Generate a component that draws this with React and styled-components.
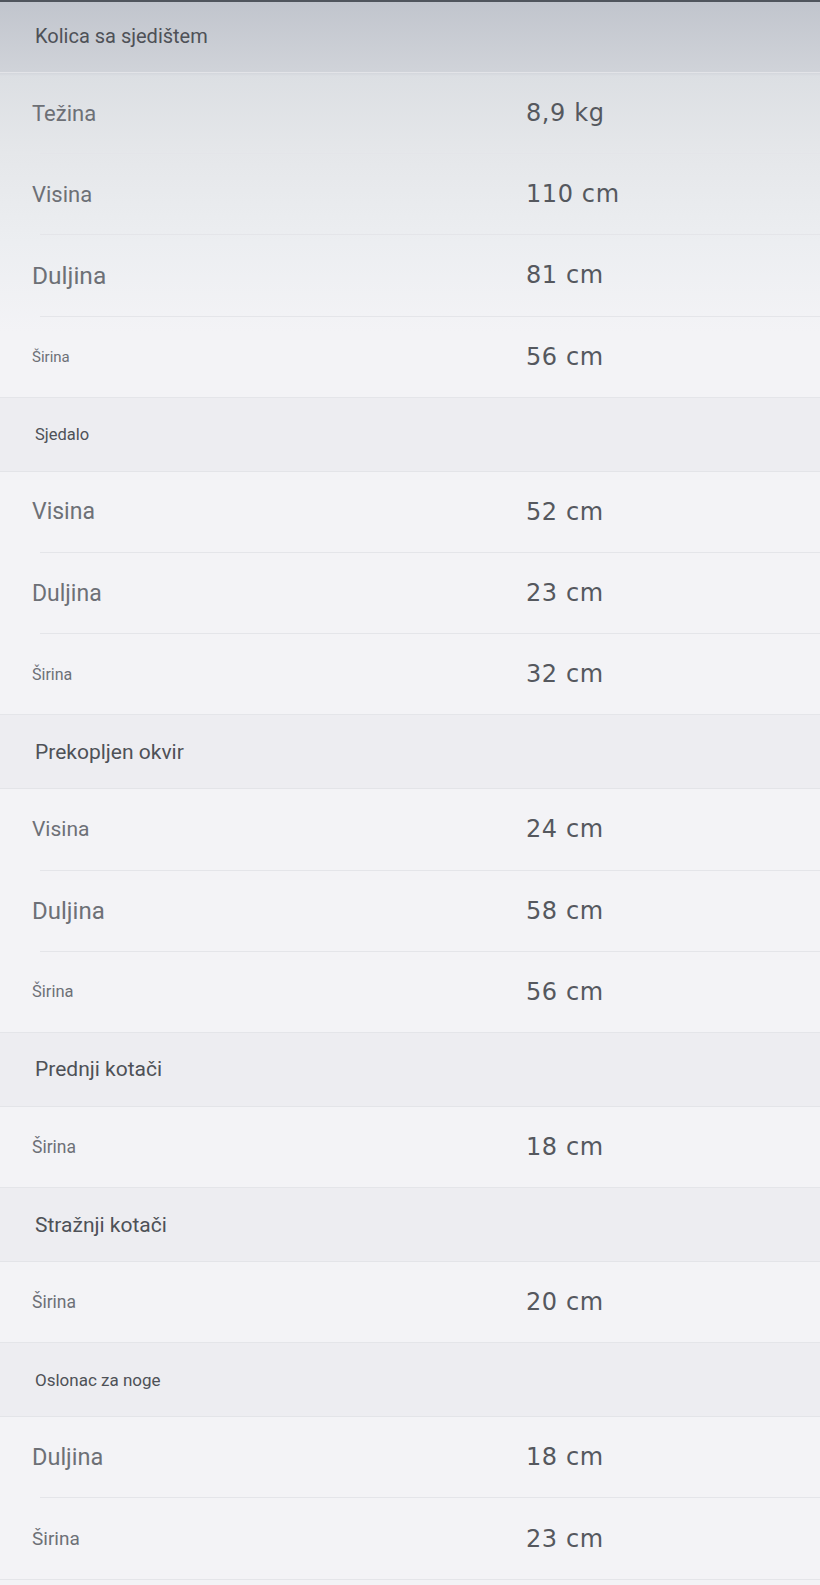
import React from "react";
import styled, { createGlobalStyle } from "styled-components";

const GlobalStyle = createGlobalStyle`
  html, body {
    margin: 0;
    padding: 0;
    background: #f3f3f6;
  }
  body {
    font-family: Roboto, "Noto Sans", sans-serif;
  }
`;

const Page = styled.div`
  width: 820px;
  min-height: 1585px;
  border-top: 2px solid #50555d;
  box-sizing: border-box;
  background: linear-gradient(
    180deg,
    #c1c5cd 0px,
    #d0d3d9 70px,
    #dcdfe3 74px,
    #e5e7ea 150px,
    #eceef1 240px,
    #f3f3f6 330px,
    #f3f3f6 100%
  );
`;

const Group = styled.section`
  display: flex;
  flex-direction: column;
`;

const GroupHead = styled.div`
  display: flex;
  align-items: center;
  box-sizing: border-box;
  height: ${props => (props.$first ? "71px" : "74px")};
  padding-left: 35px;
  padding-bottom: ${props => (props.$first ? "3px" : "0")};
  border-bottom: 1px solid #e3e4e8;
  background: ${props => (props.$first ? "transparent" : "rgba(120, 124, 140, 0.045)")};
`;

const GroupTitle = styled.h3`
  margin: 0;
  font-family: Roboto, "Noto Sans", sans-serif;
  font-weight: 400;
  font-size: ${props => props.$size}px;
  color: #4e5157;
`;

const Row = styled.div`
  display: grid;
  grid-template-columns: 494px 1fr;
  align-items: center;
  height: 80.2px;
  padding-left: 32px;
  position: relative;
  border-bottom: 1px solid ${props => (props.$last ? "#e4e5e9" : "transparent")};

  &::after {
    content: "";
    display: ${props => (props.$last ? "none" : "block")};
    position: absolute;
    left: 40px;
    right: 0;
    bottom: -1px;
    height: 1px;
    background: #e4e5e9;
  }
`;

const Label = styled.span`
  font-family: Roboto, "Noto Sans", sans-serif;
  font-size: ${props => props.$size}px;
  color: #6d7076;
`;

const Value = styled.span`
  font-family: "DejaVu Sans", sans-serif;
  font-size: 24px;
  letter-spacing: 0.6px;
  color: #55585e;
`;

const groups = [
  {
    title: "Kolica sa sjedištem",
    size: 20,
    rows: [
      { label: "Težina", size: 22, value: "8,9 kg" },
      { label: "Visina", size: 22, value: "110 cm" },
      { label: "Duljina", size: 24.5, value: "81 cm" },
      { label: "Širina", size: 15, value: "56 cm" },
    ],
  },
  {
    title: "Sjedalo",
    size: 16.5,
    rows: [
      { label: "Visina", size: 23, value: "52 cm" },
      { label: "Duljina", size: 23, value: "23 cm" },
      { label: "Širina", size: 16, value: "32 cm" },
    ],
  },
  {
    title: "Prekopljen okvir",
    size: 21,
    rows: [
      { label: "Visina", size: 21, value: "24 cm" },
      { label: "Duljina", size: 24, value: "58 cm" },
      { label: "Širina", size: 16.5, value: "56 cm" },
    ],
  },
  {
    title: "Prednji kotači",
    size: 21,
    rows: [{ label: "Širina", size: 17.5, value: "18 cm" }],
  },
  {
    title: "Stražnji kotači",
    size: 21,
    rows: [{ label: "Širina", size: 17.5, value: "20 cm" }],
  },
  {
    title: "Oslonac za noge",
    size: 17,
    rows: [
      { label: "Duljina", size: 23.5, value: "18 cm" },
      { label: "Širina", size: 19, value: "23 cm" },
    ],
  },
];

const App = () => (
  <>
    <GlobalStyle />
    <Page>
      {groups.map((group, gi) => (
        <Group key={group.title}>
          <GroupHead $first={gi === 0}>
            <GroupTitle $size={group.size}>{group.title}</GroupTitle>
          </GroupHead>
          {group.rows.map((row, ri) => (
            <Row key={row.label + ri} $last={ri === group.rows.length - 1}>
              <Label $size={row.size}>{row.label}</Label>
              <Value>{row.value}</Value>
            </Row>
          ))}
        </Group>
      ))}
    </Page>
  </>
);

export default App;
